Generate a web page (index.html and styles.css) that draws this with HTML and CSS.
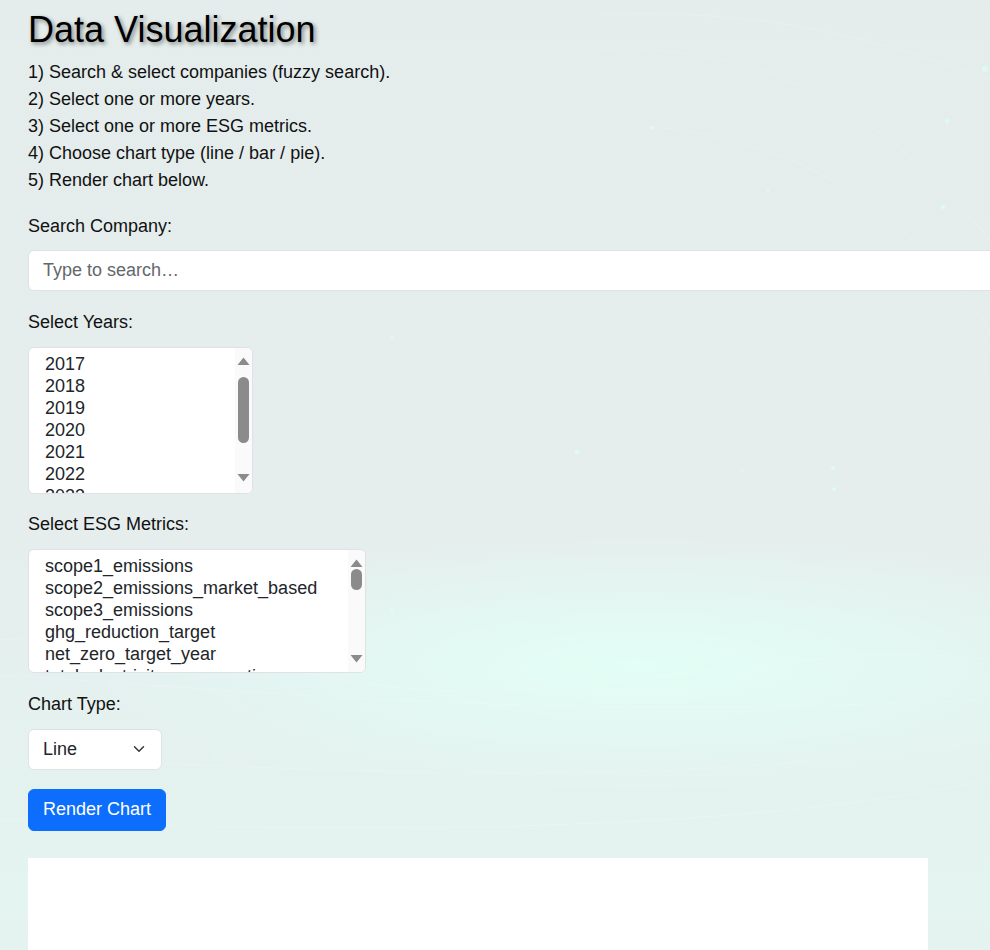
FILE: index.html
```html
<!DOCTYPE html>
<html lang="en">
<head>
<meta charset="utf-8">
<title>Data Visualization</title>
<link rel="stylesheet" href="styles.css">
</head>
<body>
<main class="page">
  <h1 class="title">Data Visualization</h1>
  <div class="steps">
    <div>1) Search &amp; select companies (fuzzy search).</div>
    <div>2) Select one or more years.</div>
    <div>3) Select one or more ESG metrics.</div>
    <div>4) Choose chart type (line / bar / pie).</div>
    <div>5) Render chart below.</div>
  </div>

  <div class="field">
    <label class="field-label" for="company">Search Company:</label>
    <input class="text-input" id="company" type="text" placeholder="Type to search…">
  </div>

  <div class="field">
    <label class="field-label" for="years">Select Years:</label>
    <div class="list-wrap">
      <select class="list-select years" id="years" multiple>
        <option>2017</option>
        <option>2018</option>
        <option>2019</option>
        <option>2020</option>
        <option>2021</option>
        <option>2022</option>
        <option>2023</option>
        <option>2024</option>
        <option>2025</option>
      </select>
      <div class="fake-scroll fake-scroll-years" aria-hidden="true">
        <svg class="arrow" width="13" height="8" viewBox="0 0 13 8"><path d="M0.5 8 L6.5 0.5 L12.5 8 Z"/></svg>
        <div class="thumb"></div>
        <svg class="arrow arrow-down" width="13" height="8" viewBox="0 0 13 8"><path d="M0.5 0 L6.5 7.5 L12.5 0 Z"/></svg>
      </div>
    </div>
  </div>

  <div class="field">
    <label class="field-label" for="metrics">Select ESG Metrics:</label>
    <div class="list-wrap">
      <select class="list-select metrics" id="metrics" multiple>
        <option>scope1_emissions</option>
        <option>scope2_emissions_market_based</option>
        <option>scope3_emissions</option>
        <option>ghg_reduction_target</option>
        <option>net_zero_target_year</option>
        <option>total_electricity_consumption</option>
        <option>renewable_energy_share</option>
        <option>water_withdrawal</option>
        <option>water_consumption</option>
        <option>total_waste_generated</option>
        <option>waste_recycling_rate</option>
        <option>employee_count</option>
        <option>female_employee_ratio</option>
        <option>board_independence</option>
        <option>lost_time_injury_rate</option>
        <option>community_investment</option>
      </select>
      <div class="fake-scroll fake-scroll-metrics" aria-hidden="true">
        <svg class="arrow" width="13" height="8" viewBox="0 0 13 8"><path d="M0.5 8 L6.5 0.5 L12.5 8 Z"/></svg>
        <div class="thumb"></div>
        <svg class="arrow arrow-down" width="13" height="8" viewBox="0 0 13 8"><path d="M0.5 0 L6.5 7.5 L12.5 0 Z"/></svg>
      </div>
    </div>
  </div>

  <div class="field">
    <label class="field-label" for="ctype">Chart Type:</label>
    <select class="type-select" id="ctype">
      <option>Line</option>
      <option>Bar</option>
      <option>Pie</option>
    </select>
  </div>

  <button class="btn-render" type="button">Render Chart</button>

  <div class="chart-box"></div>
</main>
</body>
</html>
```

FILE: styles.css
```css
html {
  overflow-x: hidden;
}

body {
  margin: 0;
  min-height: 100vh;
  font-family: "Liberation Sans", Arial, sans-serif;
  font-size: 18px;
  line-height: 27px;
  color: #111;
  background-color: #e5eded;
  background-image:
    url("data:image/svg+xml,%3Csvg xmlns='http://www.w3.org/2000/svg' width='990' height='950'%3E%3Cg fill='none' stroke='%23ffffff' stroke-opacity='0.16' stroke-width='1.2'%3E%3Cpath d='M600 15 C 800 5 930 60 990 80'/%3E%3Cpath d='M600 50 C 780 40 900 130 990 240'/%3E%3Cpath d='M650 127 C 820 140 920 230 990 330'/%3E%3Cpath d='M0 640 C 200 620 300 700 500 690 C 700 680 850 640 990 660'/%3E%3Cpath d='M0 675 C 250 690 500 720 990 700'/%3E%3Cpath d='M0 760 C 250 760 600 800 990 740'/%3E%3Cpath d='M0 820 C 300 830 700 840 990 780'/%3E%3C/g%3E%3Cg fill='%23dcfcf4' fill-opacity='0.8'%3E%3Ccircle cx='985' cy='69' r='3'/%3E%3Ccircle cx='947' cy='121' r='2.5'/%3E%3Ccircle cx='652' cy='128' r='2'/%3E%3Ccircle cx='943' cy='207' r='2.5'/%3E%3Ccircle cx='768' cy='190' r='1.5'/%3E%3Ccircle cx='577' cy='452' r='2.5'/%3E%3Ccircle cx='742' cy='470' r='1.5'/%3E%3Ccircle cx='833' cy='468' r='2'/%3E%3Ccircle cx='834' cy='489' r='2'/%3E%3Ccircle cx='392' cy='337' r='1.5'/%3E%3Ccircle cx='392' cy='610' r='2'/%3E%3Ccircle cx='214' cy='755' r='1.5'/%3E%3C/g%3E%3C/svg%3E"),
    radial-gradient(ellipse 560px 130px at 640px 665px, rgba(226, 255, 246, 0.95), rgba(226, 255, 246, 0) 100%),
    linear-gradient(180deg, #e4ecec 0%, #e5eeed 40%, #e4f4f0 68%, #e6f0ee 85%, #e6eeee 100%);
  background-repeat: no-repeat;
}

.page {
  display: flex;
  flex-direction: column;
  align-items: flex-start;
  padding: 8px 28px 40px;
}

.title {
  margin: 0 0 7.4px;
  font-size: 36px;
  font-weight: 400;
  line-height: 43.2px;
  color: #000;
  text-shadow: 2px 2px 4px rgba(0, 0, 0, 0.45);
}

.steps {
  margin-bottom: 19px;
}

.field {
  display: flex;
  flex-direction: column;
  align-items: flex-start;
  margin-bottom: 17.5px;
}

.field-label {
  display: block;
  margin-bottom: 11px;
}

.text-input {
  box-sizing: border-box;
  width: 1000px;
  height: 41px;
  margin: -0.6px 0 0;
  padding: 6px 14px;
  font: inherit;
  line-height: 27px;
  color: #212529;
  background: #fff;
  border: 1px solid #dee2e6;
  border-radius: 6px;
  outline: none;
}

.text-input::placeholder {
  color: #62676c;
}

.list-wrap {
  position: relative;
  display: flex;
}

.list-select {
  box-sizing: border-box;
  padding: 6px 17px 6px 14px;
  font-family: inherit;
  font-size: 18px;
  color: #212529;
  background: #fff;
  border: 1px solid #dee2e6;
  border-radius: 6px;
  outline: none;
  overflow: hidden;
  scrollbar-width: none;
}

.list-select option {
  padding: 0 2px 0.5px;
}

.years {
  width: 225px;
  height: 147px;
}

.metrics {
  width: 338px;
  height: 124px;
}

.fake-scroll {
  position: absolute;
  top: 1px;
  right: 1px;
  bottom: 1px;
  box-sizing: border-box;
  width: 17px;
  display: flex;
  flex-direction: column;
  align-items: center;
  background: #fafafa;
  border-radius: 0 5px 5px 0;
}

.arrow {
  display: block;
  flex: none;
  fill: #8b8b8b;
}

.arrow-down {
  margin-top: auto;
}

.thumb {
  flex: none;
  width: 11px;
  background: #8b8b8b;
  border-radius: 6px;
}

.fake-scroll-years {
  padding: 9.5px 0 10.5px;
}

.fake-scroll-years .thumb {
  margin-top: 12px;
  height: 66px;
}

.fake-scroll-metrics {
  padding: 8.5px 0 8.7px;
}

.fake-scroll-metrics .thumb {
  margin-top: 2.5px;
  height: 21px;
}

.type-select {
  box-sizing: border-box;
  width: 134px;
  height: 41px;
  padding: 6px 36px 6px 14px;
  font-family: inherit;
  font-size: 18px;
  line-height: 27px;
  color: #212529;
  background-color: #fff;
  background-image: url("data:image/svg+xml,%3Csvg xmlns='http://www.w3.org/2000/svg' viewBox='0 0 16 16'%3E%3Cpath fill='none' stroke='%23343a40' stroke-linecap='round' stroke-linejoin='round' stroke-width='2' d='m2 5 6 6 6-6'/%3E%3C/svg%3E");
  background-repeat: no-repeat;
  background-position: right 14px center;
  background-size: 16px 12px;
  border: 1px solid #dee2e6;
  border-radius: 6px;
  appearance: none;
  -webkit-appearance: none;
  outline: none;
}

.btn-render {
  box-sizing: border-box;
  height: 42px;
  margin: 1.5px 0 0;
  padding: 6px 14px;
  font-family: inherit;
  font-size: 18px;
  line-height: 27px;
  color: #fff;
  background: #0d6efd;
  border: 1px solid #0d6efd;
  border-radius: 6px;
  cursor: pointer;
}

.chart-box {
  width: 900px;
  height: 420px;
  margin-top: 27.5px;
  background: #fff;
}
```
